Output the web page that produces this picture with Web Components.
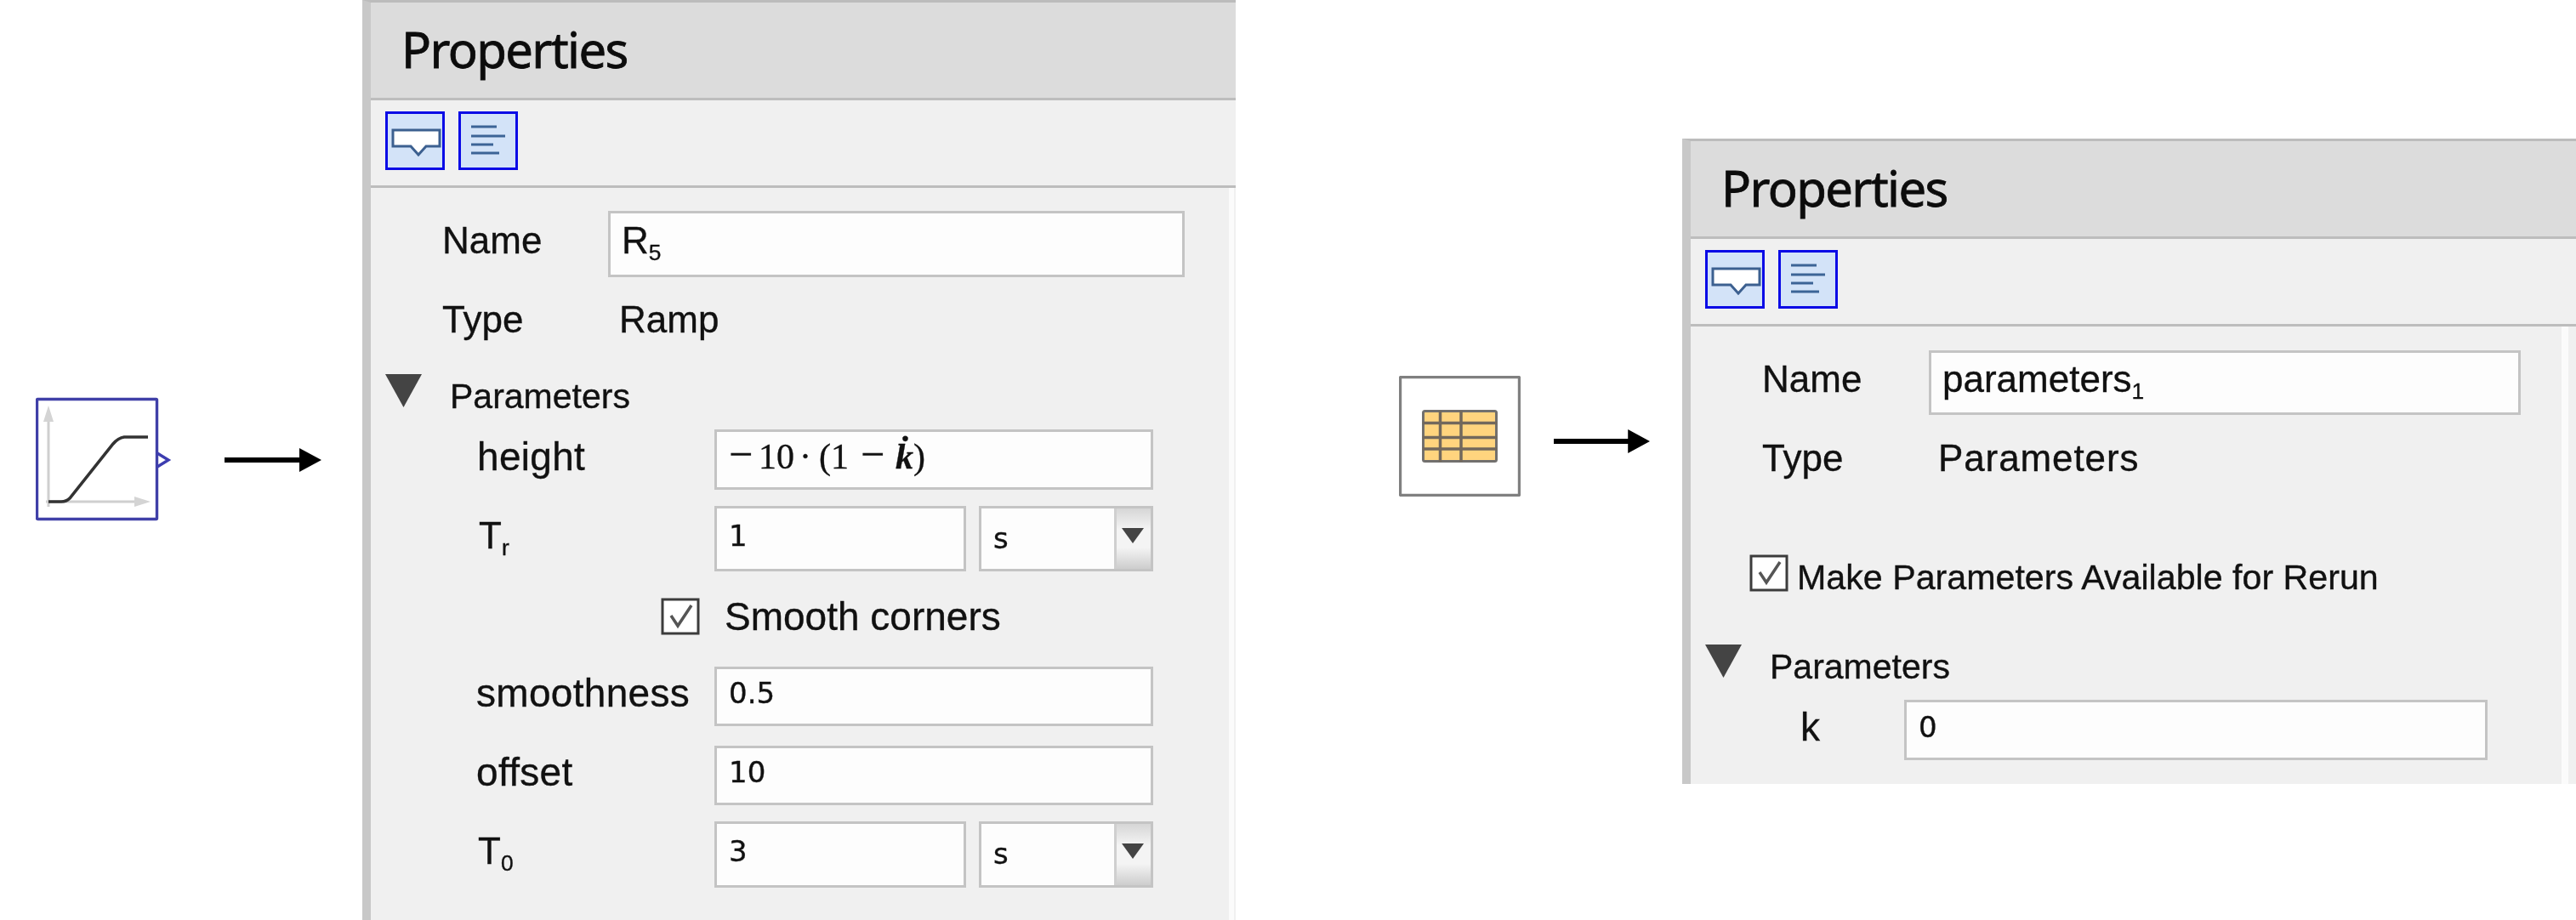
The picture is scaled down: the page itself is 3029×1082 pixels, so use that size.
<!DOCTYPE html>
<html lang="en">
<head>
  <meta charset="UTF-8">
  <title>Properties</title>
  <style>
    html, body { margin: 0; padding: 0; background: #fff; }
    body {
      display: flex;
      align-items: flex-start;
      width: 3029px;
      height: 1082px;
      overflow: hidden;
      font-family: "Liberation Sans", Arial, sans-serif;
      color: #111;
      -webkit-text-stroke: .35px;
    }
    sub { font-size: .6em; line-height: 0; vertical-align: -.3em; }
    prop-panel, ramp-block, table-block, flow-arrow { filter: blur(.55px); }
    .wide { font-size: 46px; letter-spacing: .3px; }
    .math { font-family: "Liberation Serif", serif; font-size: 42px; }
    .math b { display: inline-block; font-weight: normal; }
    .math i { font-weight: bold; }
  </style>
  <script>
    function define(name, html) {
      class El extends HTMLElement {
        constructor() {
          super();
          this.attachShadow({mode: 'open'}).innerHTML = html;
        }
      }
      customElements.define(name, El);
    }

    define('ramp-block', `
      <style>:host {display: block; width: 160px; height: 146px;} svg {display: block;}</style>
      <svg width="160" height="146" viewBox="42 467 160 146" fill="none">
        <g stroke="#cfcfcf" stroke-width="3">
          <path d="M57 485V596"/><path d="M54 590H165"/>
        </g>
        <path d="M57 477l-6 19h12zM177 590l-19-6v12z" fill="#d4d4d4"/>
        <path d="M57 590H72q6 0 10-4L133 522q6-7 13-8H174" stroke="#333" stroke-width="3.6"/>
        <rect x="43.5" y="469.5" width="141" height="141" rx="1" stroke="#4040a8" stroke-width="3.4"/>
        <path d="M185 533L198 541L185 549" stroke="#3d3db0" stroke-width="3.4"/>
      </svg>`);

    define('table-block', `
      <style>:host {display: block; width: 143px; height: 142px;} svg {display: block;}</style>
      <svg width="143" height="142" viewBox="1645 442 143 142" fill="none">
        <rect x="1646.5" y="443.5" width="140" height="139" rx="1" fill="#fff" stroke="#808080" stroke-width="3.4"/>
        <rect x="1673.5" y="483.5" width="86" height="59" rx="2" fill="#ffd47e" stroke="#72706e" stroke-width="3"/>
        <path d="M1693.5 483V543M1718 483V543M1673 497.5H1760M1673 514.5H1760M1673 528H1760" stroke="#72685c" stroke-width="3.5"/>
      </svg>`);

    define('flow-arrow', `
      <style>:host {display: block; width: 114px; height: 28px;} svg {display: block; width: 100%; height: 100%;}</style>
      <svg viewBox="0 0 114 28" preserveAspectRatio="none"><path d="M0 11H88V0L114 14L88 28V17H0z" fill="#000"/></svg>`);

    define('tool-button', `
      <style>
        :host {display: block; width: 70px; height: 69px; box-sizing: border-box; border: 3px solid #0a0ae6; background: #d3e3f8;}
        ::slotted(svg) {display: block;}
      </style>
      <slot></slot>`);

    define('prop-panel', `
      <style>
        :host {display: flex; flex-direction: column; box-sizing: border-box; overflow: hidden;
          border-top: 3px solid #bcbcbc; border-left: 10px solid #c8c8c8; background: #f0f0f0;}
        .head {height: 112px; flex: none; box-sizing: border-box; padding: 0 0 4px 36px; display: flex; align-items: center;
          background: #dcdcdc; font: 58px "Noto Sans", sans-serif; letter-spacing: -1.6px; color: #0c0c0c; -webkit-text-stroke: .8px;}
        .line {height: 3px; flex: none; background: #bdbdbd;}
        .tools {height: 100px; flex: none; box-sizing: border-box; padding: 13px 0 0 17px; display: flex; gap: 16px;}
        .body {flex: 1; margin-right: var(--tail, 2px); border-right: var(--strip, 6px) solid #fbfbfb;}
      </style>
      <div class="head">Properties</div>
      <div class="line"></div>
      <div class="tools"><slot name="tools"></slot></div>
      <div class="line"></div>
      <div class="body"><slot></slot></div>`);

    define('prop-row', `
      <style>
        :host {display: flex; align-items: stretch; font-size: 44px; color: #111;}
        .label {flex: none; display: flex; align-items: center; box-sizing: border-box; padding: 0 0 8px var(--label-x, 84px);
          width: var(--field-x, 280px); white-space: nowrap;}
        .field {flex: none; display: flex; gap: 15px; width: var(--field-w, 677px); align-items: stretch;}
      </style>
      <div class="label"><slot name="label"></slot></div>
      <div class="field"><slot></slot></div>`);

    define('value-box', `
      <style>
        :host {display: flex; align-items: center; flex: 1; box-sizing: border-box; padding: 0 0 8px var(--pad, 14px);
          border: 3px solid #c4c4c4; background: #fdfdfd; font: 34px "DejaVu Sans", sans-serif; color: #111; white-space: nowrap;}
      </style>
      <span><slot></slot></span>`);

    define('plain-value', `
      <style>:host {display: flex; align-items: center; padding-bottom: 8px; font-size: 44px; white-space: nowrap;}</style>
      <span><slot></slot></span>`);

    define('unit-select', `
      <style>
        :host {display: flex; flex: none; width: 205px; box-sizing: border-box; border: 3px solid #c4c4c4; background: #fdfdfd;
          font: 34px "DejaVu Sans", sans-serif; color: #111;}
        .val {flex: 1; display: flex; align-items: center; padding: 0 0 2px 14px;}
        .btn {flex: none; width: 43px; border-left: 3px solid #cfcfcf; box-sizing: border-box; padding: 23px 0 0 6px;
          background: linear-gradient(#d6d6d6, #f4f4f4 35%, #f4f4f4 65%, #cdcdcd);}
        svg {display: block;}
      </style>
      <div class="val"><slot></slot></div>
      <div class="btn"><svg width="26" height="18" viewBox="0 0 26 18"><path d="M0 0H26L13 18z" fill="#444"/></svg></div>`);

    define('check-row', `
      <style>
        :host {display: flex; align-items: center; padding-left: var(--left, 341px); gap: var(--gap, 29px); font-size: var(--size, 46px); color: #111; white-space: nowrap;}
        svg {display: block; flex: none;}
        span {padding-top: var(--drop, 0);}
      </style>
      <svg width="46" height="44" viewBox="0 0 46 44">
        <rect x="2" y="2" width="42" height="40" fill="#fff" stroke="#3c3c3c" stroke-width="3"/>
        <path d="M12 21L20 33L36 9" fill="none" stroke="#555" stroke-width="3.5"/>
      </svg>
      <span><slot></slot></span>`);

    define('section-head', `
      <style>
        :host {display: flex; align-items: flex-start; padding-left: 17px; gap: 33px; font-size: 41px; line-height: 41px; color: #111;}
        svg {display: block; flex: none;}
        span {margin-top: 6px;}
      </style>
      <svg width="43" height="39" viewBox="0 0 43 39" preserveAspectRatio="none"><path d="M0 0H43L21.5 39z" fill="#444"/></svg>
      <span><slot></slot></span>`);
  </script>
</head>
<body>
  <ramp-block style="margin:467px 0 0 42px"></ramp-block>
  <flow-arrow style="margin:527px 0 0 62px"></flow-arrow>
  <prop-panel style="margin-left:48px;width:1027px;height:1082px">
    <tool-button slot="tools"><svg width="64" height="63" viewBox="0 0 64 63" fill="none"><path d="M6 19H61V38H45L36 48L27 38H6z" fill="#fff" stroke="#3c6090" stroke-width="3"/></svg></tool-button>
    <tool-button slot="tools"><svg width="64" height="63" viewBox="0 0 64 63" fill="none" stroke="#3c6496" stroke-width="3"><path d="M12 15H42M12 26H52M12 36H38M12 46H45"/></svg></tool-button>

    <prop-row style="height:78px;margin-top:27px;--field-x:279px;--field-w:678px"><span slot="label">Name</span><value-box style="font:44px 'Liberation Sans',sans-serif;--pad:13px">R<sub>5</sub></value-box></prop-row>
    <prop-row style="height:50px;margin-top:29px"><span slot="label">Type</span><plain-value style="margin-left:12px">Ramp</plain-value></prop-row>
    <section-head style="height:39px;margin-top:35px">Parameters</section-head>
    <prop-row style="height:71px;margin-top:26px;--label-x:125px;--field-x:404px;--field-w:516px"><span slot="label" class="wide">height</span><value-box><span class="math"><b style="font-size:50px;line-height:0;width:27px">&minus;</b><b style="margin-left:8px">10</b><b style="margin-left:6px">&middot;</b><b style="margin-left:9px">(1</b><b style="font-size:50px;line-height:0;margin-left:14px;width:30px">&minus;</b><i style="margin-left:11px">k&#775;</i>)</span></value-box></prop-row>
    <prop-row style="height:77px;margin-top:19px;--label-x:127px;--field-x:404px;--field-w:516px"><span slot="label">T<sub>r</sub></span><value-box>1</value-box><unit-select>s</unit-select></prop-row>
    <check-row style="height:44px;margin-top:31px">Smooth corners</check-row>
    <prop-row style="height:70px;margin-top:37px;--label-x:124px;--field-x:404px;--field-w:516px"><span slot="label" class="wide">smoothness</span><value-box>0.5</value-box></prop-row>
    <prop-row style="height:70px;margin-top:23px;--label-x:124px;--field-x:404px;--field-w:516px"><span slot="label" class="wide">offset</span><value-box>10</value-box></prop-row>
    <prop-row style="height:78px;margin-top:19px;--label-x:126px;--field-x:404px;--field-w:516px"><span slot="label">T<sub>0</sub></span><value-box>3</value-box><unit-select>s</unit-select></prop-row>
  </prop-panel>

  <table-block style="margin:442px 0 0 192px"></table-block>
  <flow-arrow style="margin:505px 0 0 39px;width:113px"></flow-arrow>
  <prop-panel style="margin:163px 0 0 38px;width:1051px;height:759px;flex:none;--tail:9px;--strip:8px">
    <tool-button slot="tools"><svg width="64" height="63" viewBox="0 0 64 63" fill="none"><path d="M6 19H61V38H45L36 48L27 38H6z" fill="#fff" stroke="#3c6090" stroke-width="3"/></svg></tool-button>
    <tool-button slot="tools"><svg width="64" height="63" viewBox="0 0 64 63" fill="none" stroke="#3c6496" stroke-width="3"><path d="M12 15H42M12 26H52M12 36H38M12 46H45"/></svg></tool-button>

    <prop-row style="height:76px;margin-top:28px;--field-w:696px"><span slot="label">Name</span><value-box style="font:44px 'Liberation Sans',sans-serif;--pad:13px">parameters<sub>1</sub></value-box></prop-row>
    <prop-row style="height:50px;margin-top:30px"><span slot="label">Type</span><plain-value style="margin-left:11px;letter-spacing:.9px">Parameters</plain-value></prop-row>
    <check-row style="height:46px;margin-top:83px;--left:69px;--gap:10px;--size:41.2px;--drop:11px">Make Parameters Available for Rerun</check-row>
    <section-head style="height:40px;margin-top:61px">Parameters</section-head>
    <prop-row style="height:71px;margin-top:25px;--label-x:129px;--field-x:251px;--field-w:686px"><span slot="label" class="wide">k</span><value-box>0</value-box></prop-row>
  </prop-panel>
</body>
</html>
